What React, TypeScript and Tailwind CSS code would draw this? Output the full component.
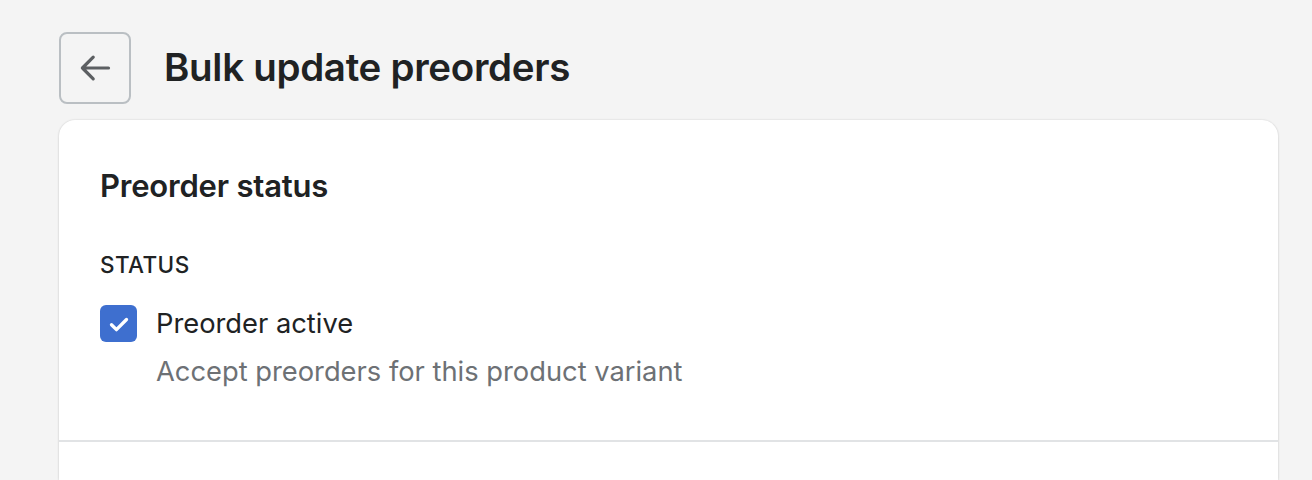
import React from "react";

const font = { fontFamily: "Inter, 'Liberation Sans', sans-serif" };

const BackArrow: React.FC = () => (
  <svg width="36" height="36" viewBox="0 0 20 20" fill="none">
    <path
      d="M17.5 10H3M9 4L3 10L9 16"
      stroke="#5c5f62"
      strokeWidth="1.8"
      strokeLinecap="round"
      strokeLinejoin="round"
    />
  </svg>
);

export default function App() {
  return (
    <div
      className="h-[480px] overflow-hidden bg-[#f4f4f4] pl-[59px] pr-[34px] pt-[32px] text-[#202223]"
      style={font}
    >
      {/* ヘッダー */}
      <div className="flex items-center gap-[33px]">
        <button className="flex h-[72px] w-[72px] items-center justify-center rounded-[8px] border-2 border-[#babfc3]">
          <BackArrow />
        </button>
        <h1 className="text-[38.5px] font-semibold tracking-[-0.3px]">
          Bulk update preorders
        </h1>
      </div>

      {/* カード */}
      <div className="mt-[16px] rounded-t-[16px] bg-white shadow-[0_0_2px_rgba(0,0,0,0.15),0_1px_3px_rgba(0,0,0,0.08)]">
        <div className="px-[41px] pt-[46px] pb-[49px]">
          <h2 className="text-[31px] font-semibold leading-[40px] tracking-[-0.2px]">
            Preorder status
          </h2>
          <div className="mt-[45px] text-[22.5px] font-medium uppercase leading-[28px] tracking-[0.4px]">
            Status
          </div>
          <div className="mt-[26px] flex gap-[19px]">
            <div className="flex h-[37px] w-[37px] shrink-0 items-center justify-center rounded-[6px] bg-[#3e6fcf]">
              <svg width="30" height="30" viewBox="0 0 20 20" fill="none">
                <path
                  d="M5 10.5L8.3 13.8L15 7"
                  stroke="white"
                  strokeWidth="2.2"
                  strokeLinecap="round"
                  strokeLinejoin="round"
                />
              </svg>
            </div>
            <div>
              <div className="text-[27.3px] leading-[38px]">Preorder active</div>
              <div className="mt-[10px] text-[27.3px] leading-[38px] text-[#6d7175]">
                Accept preorders for this product variant
              </div>
            </div>
          </div>
        </div>
        <div className="h-[2px] bg-[#e1e3e5]" />
        <div className="h-[38px]" />
      </div>
    </div>
  );
}
